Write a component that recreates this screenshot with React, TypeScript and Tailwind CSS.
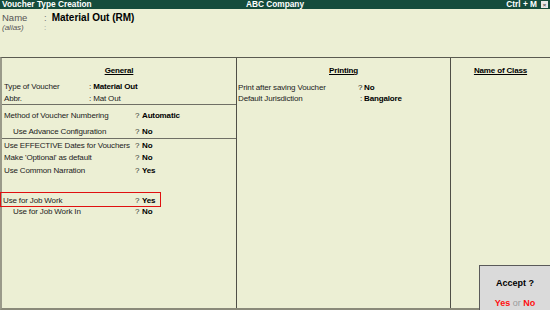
import React from "react";

const Row = ({ label, value, indent = false }: { label: string; value: string; indent?: boolean }) => (
  <div className="flex h-[12px] items-center leading-[12px]">
    <div className={`w-[133px] shrink-0 whitespace-nowrap ${indent ? "pl-[11px]" : "pl-[2px]"}`}>{label}</div>
    <span className="w-[7px] shrink-0 text-[#333]">?</span>
    <span className="font-bold text-black">{value}</span>
  </div>
);

export default function App() {
  return (
    <div
      className="relative flex h-[310px] w-[550px] flex-col overflow-hidden bg-[#ECEFD4] text-[8px] tracking-[-0.15px] text-[#222]"
      style={{ fontFamily: '"Liberation Sans", Arial, sans-serif' }}
    >
      {/* Title bar */}
      <div className="flex h-[9px] shrink-0 items-center bg-[#154c3c] pl-[2px] pr-[2px] text-[8.3px] font-bold leading-[9px] tracking-normal text-white">
        <div className="flex-1">Voucher Type Creation</div>
        <div className="flex-1 text-center">ABC Company</div>
        <div className="flex flex-1 items-center justify-end gap-[4px]">
          <span>Ctrl + M</span>
          <span className="flex h-[7px] w-[7px] items-center justify-center bg-[#e8e8e8] text-[6px] leading-none text-[#555]">×</span>
        </div>
      </div>

      {/* Name section */}
      <div className="h-[48px] shrink-0 pl-[2px] pt-[3px] tracking-normal">
        <div className="flex h-[11px] items-center text-[9.5px] leading-[11px]">
          <span className="w-[42px] text-[#555]">Name</span>
          <span className="text-[#777]">:</span>
          <span className="pl-[5px] text-[10px] font-bold text-black">Material Out (RM)</span>
        </div>
        <div className="flex h-[10px] items-center text-[8px] italic leading-[10px]">
          <span className="w-[42px] text-[#555]">(alias)</span>
          <span className="not-italic text-[#999]">:</span>
        </div>
      </div>

      {/* Main area */}
      <div className="flex flex-1 border-b-2 border-l-2 border-t border-b-[#8a8a7a] border-l-[#9a9a8a] border-t-[#5a5a50]">
        {/* General column */}
        <div className="w-[235px] shrink-0 border-r border-[#4f4f47] pt-[7px]">
          <div className="flex h-[12px] items-center justify-center leading-[12px]">
            <span className="font-bold text-black underline underline-offset-1">General</span>
          </div>
          <div className="mt-[4px] flex h-[12px] items-center pl-[2px] leading-[12px]">
            <span className="w-[85px] shrink-0">Type of Voucher</span>
            <span>:&nbsp;</span>
            <span className="font-bold text-black">Material Out</span>
          </div>
          <div className="flex h-[11px] items-center pl-[2px] leading-[11px]">
            <span className="w-[85px] shrink-0">Abbr.</span>
            <span>:&nbsp;Mat Out</span>
          </div>
          <div className="border-b border-[#6f6f65]" />
          <div className="mt-[5px]">
            <Row label="Method of Voucher Numbering" value="Automatic" />
          </div>
          <div className="mt-[4px]">
            <Row label="Use Advance Configuration" value="No" indent />
          </div>
          <div className="border-b border-[#6f6f65]" />
          <div className="mt-[1px]">
            <Row label="Use EFFECTIVE Dates for Vouchers" value="No" />
          </div>
          <Row label="Make 'Optional' as default" value="No" />
          <div className="mt-[1px]">
            <Row label="Use Common Narration" value="Yes" />
          </div>
          <div className="-ml-[2px] mt-[15px] w-[161px] border border-[#e01010] pt-[2px]">
            <div className="flex h-[11px] items-center leading-[11px]">
              <div className="w-[134px] shrink-0 pl-[2px]">Use for Job Work</div>
              <span className="w-[7px] shrink-0 text-[#333]">?</span>
              <span className="font-bold text-black">Yes</span>
            </div>
          </div>
          <div className="-mt-[1px]">
            <Row label="Use for Job Work In" value="No" indent />
          </div>
        </div>

        {/* Printing column */}
        <div className="w-[214px] shrink-0 border-r border-[#4f4f47] pt-[7px]">
          <div className="flex h-[12px] items-center justify-center leading-[12px]">
            <span className="font-bold text-black underline underline-offset-1">Printing</span>
          </div>
          <div className="mt-[5px] flex h-[11px] items-center pl-[1px] leading-[11px]">
            <span className="w-[120px] shrink-0">Print after saving Voucher</span>
            <span className="w-[6px] shrink-0">?</span>
            <span className="font-bold text-black">No</span>
          </div>
          <div className="flex h-[11px] items-center pl-[1px] leading-[11px]">
            <span className="w-[122px] shrink-0">Default Jurisdiction</span>
            <span className="w-[4px] shrink-0">:</span>
            <span className="font-bold text-black">Bangalore</span>
          </div>
        </div>

        {/* Name of Class column */}
        <div className="flex-1 pt-[7px]">
          <div className="flex h-[12px] items-center justify-center leading-[12px]">
            <span className="font-bold text-black underline underline-offset-1">Name of Class</span>
          </div>
        </div>
      </div>

      {/* Accept box overlay */}
      <div className="absolute bottom-0 right-0 flex h-[45px] w-[71px] flex-col items-center border-l border-t border-[#5a5a5a] bg-[#dadada] tracking-normal">
        <div className="mt-[12px] text-[9px] font-bold leading-[10px] text-black">Accept ?</div>
        <div className="mt-[10px] text-[9px] leading-[10px]">
          <span className="font-bold text-[#ff1010]">Yes</span>
          <span className="text-[#9a9a9a]"> or </span>
          <span className="font-bold text-[#ff1010]">No</span>
        </div>
      </div>
    </div>
  );
}
